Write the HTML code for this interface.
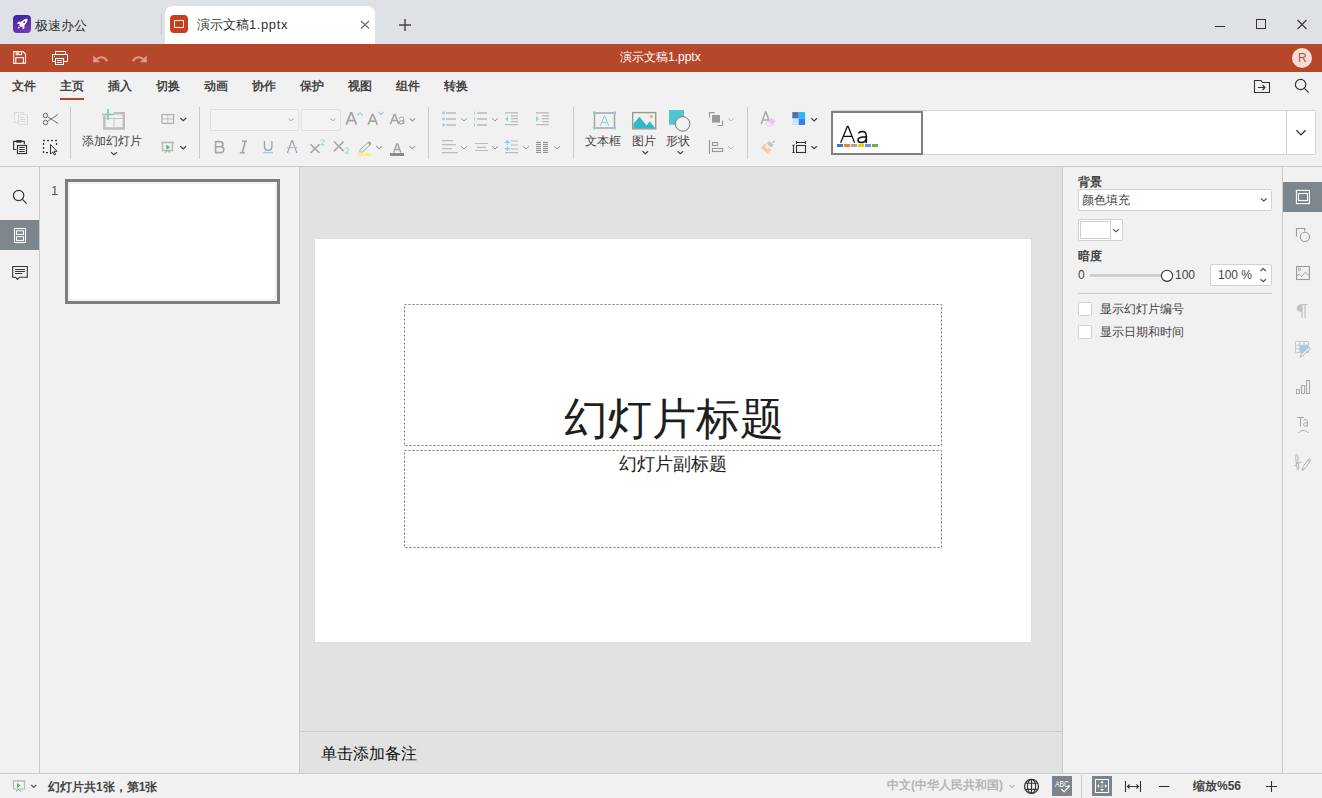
<!DOCTYPE html>
<html><head><meta charset="utf-8">
<style>
*{box-sizing:border-box;margin:0;padding:0}
html,body{width:1322px;height:798px;overflow:hidden;background:#f1f1f1;font-family:"Liberation Sans",sans-serif;color:#444}
.a{position:absolute}
.t{position:absolute;white-space:nowrap;line-height:1;z-index:2}
svg{position:absolute;overflow:visible;z-index:1}
#tabbar{left:0;top:0;width:1322px;height:44px;background:#dee1e6}
#hdr{left:0;top:44px;width:1322px;height:28px;background:#b7472a}
#menu{left:0;top:72px;width:1322px;height:95px;background:#f1f1f1;border-bottom:1px solid #cbcbcb}
.sep{position:absolute;width:1px;background:#cbcbcb}
.menu{font-size:12px;font-weight:bold;color:#444;top:80px}
</style></head><body>
<!-- tab bar -->
<div id="tabbar" class="a"></div>
<div class="a" style="left:13px;top:15px;width:18px;height:18px;border-radius:4px;background:linear-gradient(160deg,#3b23a0,#7b3bb5)"></div>
<div class="t" style="left:35px;top:19px;font-size:13px;color:#333">极速办公</div>
<div class="sep" style="left:161px;top:14px;height:21px;background:#c3c6cc"></div>
<div class="a" style="left:165px;top:6px;width:210px;height:38px;background:#fff;border-radius:8px 8px 0 0"></div>
<div class="a" style="left:170px;top:15px;width:18px;height:18px;border-radius:4px;background:#c4401f"></div>
<div class="a" style="left:174px;top:20px;width:10px;height:8px;border:1px solid rgba(255,255,255,.9)"></div>
<div class="t" style="left:197px;top:18px;font-size:13px;color:#333">演示文稿<span style="letter-spacing:.6px">1.pptx</span></div>

<!-- header -->
<div id="hdr" class="a"></div>
<div class="t" style="left:620px;top:51px;font-size:12px;color:#fff">演示文稿1.pptx</div>
<div class="a" style="left:1292px;top:48px;width:20px;height:20px;border-radius:50%;background:#f3ddd6"></div>
<div class="t" style="left:1298px;top:52px;font-size:12px;color:#b0574a">R</div>

<!-- menu -->
<div id="menu" class="a"></div>
<div class="t menu" style="left:12px">文件</div>
<div class="t menu" style="left:60px">主页</div>
<div class="a" style="left:60px;top:97.6px;width:24px;height:2.4px;background:#b7472a"></div>
<div class="t menu" style="left:108px">插入</div>
<div class="t menu" style="left:156px">切换</div>
<div class="t menu" style="left:204px">动画</div>
<div class="t menu" style="left:252px">协作</div>
<div class="t menu" style="left:300px">保护</div>
<div class="t menu" style="left:348px">视图</div>
<div class="t menu" style="left:396px">组件</div>
<div class="t menu" style="left:444px">转换</div>

<!-- main -->
<div class="a" style="left:0;top:167px;width:40px;height:606px;background:#f1f1f1;border-right:1px solid #cbcbcb"></div>
<div class="a" style="left:0;top:220px;width:39px;height:30px;background:#7e868d"></div>
<div class="a" style="left:40px;top:167px;width:260px;height:606px;background:#f1f1f1;border-right:1px solid #cbcbcb"></div>
<div class="t" style="left:51px;top:184px;font-size:13px;color:#555">1</div>
<div class="a" style="left:65px;top:179px;width:215px;height:125px;border:3px solid #7e7e7e;background:#fff;box-shadow:inset 0 0 0 2px #f2f2f2"></div>
<div class="a" style="left:300px;top:167px;width:762px;height:606px;background:#e2e2e2"></div>
<div class="a" style="left:315px;top:239px;width:716px;height:403px;background:#fff;box-shadow:0 0 0 1px #dedede"></div>
<svg width="1322" height="798" style="left:0;top:0" fill="none"><rect x="404.5" y="304.5" width="537" height="141" stroke="#7a7a7a" stroke-width="1" stroke-dasharray="2 2"/><rect x="404.5" y="450.5" width="537" height="97" stroke="#7a7a7a" stroke-width="1" stroke-dasharray="2 2"/></svg>
<div class="t" style="left:564px;top:397px;font-size:44px;color:#1e1e1e">幻灯片标题</div>
<div class="t" style="left:619px;top:455px;font-size:18px;color:#222">幻灯片副标题</div>
<div class="a" style="left:300px;top:731px;width:762px;height:42px;background:#e2e2e2;border-top:1px solid #cbcbcb"></div>
<div class="t" style="left:321px;top:746px;font-size:16px;color:#111">单击添加备注</div>
<div class="a" style="left:1062px;top:167px;width:221px;height:606px;background:#f1f1f1;border-left:1px solid #cbcbcb;border-right:1px solid #cbcbcb"></div>
<div class="a" style="left:1283px;top:182px;width:39px;height:30px;background:#7e868d"></div>

<!-- status -->
<div class="a" style="left:0;top:773px;width:1322px;height:25px;background:#f1f1f1;border-top:1px solid #cbcbcb"></div>
<div class="t" style="left:48px;top:781px;font-size:12px;font-weight:bold;color:#444">幻灯片共1张，第1张</div>
<div class="t" style="left:887px;top:779px;font-size:12px;font-weight:bold;color:#b5b5b5">中文(中华人民共和国)</div>
<div class="t" style="left:1193px;top:780px;font-size:12px;font-weight:bold;color:#444">缩放%56</div>

<!-- toolbar texts -->
<div class="t" style="left:82px;top:135px;font-size:12px;color:#444">添加幻灯片</div>
<div class="t" style="left:585px;top:135px;font-size:12px;color:#444">文本框</div>
<div class="t" style="left:632px;top:135px;font-size:12px;color:#444">图片</div>
<div class="t" style="left:666px;top:135px;font-size:12px;color:#444">形状</div>

<!-- right panel texts -->
<div class="t" style="left:1078px;top:176px;font-size:12px;font-weight:bold;color:#444">背景</div>
<div class="t" style="left:1082px;top:194px;font-size:12px;color:#444">颜色填充</div>
<div class="t" style="left:1078px;top:250px;font-size:12px;font-weight:bold;color:#444">暗度</div>
<div class="t" style="left:1078px;top:269px;font-size:12px;color:#444">0</div>
<div class="t" style="left:1175px;top:269px;font-size:12px;color:#444">100</div>
<div class="t" style="left:1218px;top:269px;font-size:12px;color:#444">100 %</div>
<div class="t" style="left:1100px;top:303px;font-size:12px;color:#444">显示幻灯片编号</div>
<div class="t" style="left:1100px;top:326px;font-size:12px;color:#444">显示日期和时间</div>
<svg width="1322" height="798" viewBox="0 0 1322 798" style="left:0;top:0" fill="none">
<!-- ===== tab bar ===== -->
<!-- rocket -->
<g transform="translate(22.4 23.9) rotate(45)" fill="#fff">
<path d="M0 -7.2C2.4 -5.4 2.5 -2 2.2 2.2H-2.2C-2.5 -2 -2.4 -5.4 0 -7.2z"/>
<path d="M-2.2 -0.8L-4.3 1.4V3.6L-2.2 2.2zM2.2 -0.8L4.3 1.4V3.6L2.2 2.2z"/>
<rect x="-1.4" y="2" width="2.8" height="1.4"/>
<path d="M-1.2 4.4H1.2L0 6.8z"/>
<circle cx="0" cy="-2.6" r="0.9" fill="#5a2eaa"/>
</g>
<!-- close x on tab -->
<path d="M361 21l8 7.5M369 21l-8 7.5" stroke="#666" stroke-width="1.1"/>
<!-- plus -->
<path d="M405 19v12M399 25h12" stroke="#444" stroke-width="1.4"/>
<!-- window controls -->
<path d="M1215 26.5h10" stroke="#333" stroke-width="1"/>
<rect x="1256.5" y="19.5" width="9" height="9" stroke="#333" stroke-width="1"/>
<path d="M1297.5 20l9 9M1306.5 20l-9 9" stroke="#333" stroke-width="1.1"/>

<!-- ===== header ===== -->
<!-- save -->
<path d="M13.6 51.6H23.2L25.5 54V63.4H13.6Z" stroke="#f8ebe6" stroke-width="1.2"/>
<path d="M16.2 51.6V54.6H21.6V51.6" stroke="#f8ebe6" stroke-width="1.1"/>
<rect x="16.8" y="52.2" width="2.4" height="1.9" fill="#efd2c8"/>
<path d="M15.8 63.4V57.7H23.4V63.4" stroke="#f8ebe6" stroke-width="1.2"/>
<!-- print -->
<path d="M55.5 54.5v-3h10v3" stroke="#fff" stroke-width="1"/>
<path d="M55.5 61.5H52.5V54.5H67.5V61.5H64" stroke="#fff" stroke-width="1"/>
<rect x="55.5" y="58.5" width="8" height="6" stroke="#fff" stroke-width="1"/>
<path d="M57 60.5h5M57 62.5h5" stroke="#fff" stroke-width="1"/>
<circle cx="54.5" cy="56.3" r=".6" fill="#fff"/>
<!-- undo / redo -->
<path d="M93.2 55.2V62.2H100.2Z" fill="#dd9a88"/>
<path d="M95.8 59.6C99.6 56 104.6 56.4 107.1 61.2" stroke="#dd9a88" stroke-width="1.9"/>
<path d="M146.8 55.2V62.2H139.8Z" fill="#dd9a88"/>
<path d="M144.2 59.6C140.4 56 135.4 56.4 132.9 61.2" stroke="#dd9a88" stroke-width="1.9"/>

<!-- ===== menu right ===== -->
<path d="M1254.5 92.5V80.5H1261L1262.5 82.5H1269.5V92.5Z" stroke="#333" stroke-width="1.1"/>
<path d="M1258 87.5H1265M1262.5 85L1265 87.5 1262.5 90" stroke="#333" stroke-width="1.1"/>
<circle cx="1300.6" cy="84.5" r="5.2" stroke="#333" stroke-width="1.2"/>
<path d="M1304.4 88.3l4.3 4.3" stroke="#333" stroke-width="1.2"/>

<!-- ===== toolbar: clipboard ===== -->
<rect x="14.5" y="112.5" width="9" height="10" stroke="#dcdcdc" stroke-width="1"/>
<rect x="18.5" y="114.5" width="9" height="10" fill="#f1f1f1" stroke="#dcdcdc" stroke-width="1"/>
<path d="M20 117.5h4M20 119.5h6M20 121.5h6" stroke="#dcdcdc" stroke-width="1"/>
<circle cx="45.5" cy="115.5" r="2.2" stroke="#666" stroke-width="1"/>
<circle cx="45.5" cy="122.5" r="2.2" stroke="#666" stroke-width="1"/>
<path d="M47.5 116.7l10.5 6.8M47.5 121.3l10.5-6.8" stroke="#666" stroke-width=".9"/>
<path d="M15.8 149.5H13.6V141.3H24.3V143.8" stroke="#333" stroke-width="1.2" stroke-linecap="round" stroke-linejoin="round"/>
<rect x="16.2" y="140.1" width="5.6" height="2.6" rx=".6" fill="#333"/>
<rect x="17.5" y="145.5" width="9" height="8" fill="#fff" stroke="#333" stroke-width="1.2"/>
<path d="M19.2 147.5h5.6M19.2 149.5h5.6M19.2 151.5h5.6" stroke="#333" stroke-width="1"/>
<g fill="#333"><rect x="43" y="139.9" width="2" height="1.25"/><rect x="47" y="139.9" width="2" height="1.25"/><rect x="51" y="139.9" width="2" height="1.25"/><rect x="55" y="139.9" width="2" height="1.25"/><rect x="42.9" y="143" width="1.25" height="2"/><rect x="42.9" y="147" width="1.25" height="2"/><rect x="42.9" y="151" width="1.25" height="2"/><rect x="46" y="152" width="2" height="1.25"/><rect x="55.9" y="143" width="1.25" height="2"/></g>
<path d="M50.5 144.5v9.5l2.3-2 1.7 3 1.2-.7-1.7-3h3z" stroke="#333" stroke-width="1" fill="#f1f1f1"/>
<!-- separators -->
<path d="M70.5 107v52M199.5 107v52M428.5 107v52M573.5 107v52M747.5 107v52" stroke="#cbcbcb" stroke-width="1"/>

<!-- add slide -->
<path d="M113.7 113.2H123.8V128.5H104.3V116" stroke="#bdbdbd" stroke-width="2.4"/>
<path d="M105 118.5h18M114 118.5v9" stroke="#c4c4c4" stroke-width="1"/>
<path d="M108 109v11M102 114.5h12" stroke="#76cf9c" stroke-width="1.6"/>
<path d="M111 152.3l3 2.5 3-2.5" stroke="#444" stroke-width="1.2"/>
<!-- layout -->
<rect x="162" y="114.6" width="11.6" height="8.8" stroke="#b0b0b0" stroke-width="1.3"/>
<path d="M167.8 115v8M162.5 119h11" stroke="#bdbdbd" stroke-width="1"/>
<path d="M180.3 118l2.9 2.7 2.9-2.7" stroke="#444" stroke-width="1.2"/>
<!-- slideshow -->
<path d="M161 142.5h13" stroke="#b8b8b8" stroke-width="1.6"/>
<path d="M162.5 142.5v8h10v-8" stroke="#b8b8b8" stroke-width="1.5"/>
<path d="M165 152.5l2.5-2 2.5 2" stroke="#999" stroke-width="1"/>
<path d="M166.3 144.8v4.8l4-2.4z" fill="#3cc257"/>
<path d="M180.3 146.2l2.9 2.7 2.9-2.7" stroke="#444" stroke-width="1.2"/>
</svg>
<svg width="1322" height="798" viewBox="0 0 1322 798" style="left:0;top:0" fill="none">
<!-- font combos -->
<rect x="210.5" y="109.5" width="88" height="21" rx="1" fill="#f3f3f3" stroke="#e0e0e0" stroke-width="1"/>
<rect x="301.5" y="109.5" width="39" height="21" rx="1" fill="#f3f3f3" stroke="#e0e0e0" stroke-width="1"/>
<path d="M288.5 118.5l2.5 2.3 2.5-2.3M330.5 118.5l2.5 2.3 2.5-2.3" stroke="#aaa" stroke-width="1"/>
<!-- grow/shrink -->
<path d="M346.2 124.6l4.7-11.6h.8l4.7 11.6M348.2 120.6h6.2" stroke="#a5a5a5" stroke-width="1.8"/>
<path d="M357.3 115.5l2.7-2.7 2.7 2.7" stroke="#8fd4e0" stroke-width="1.2"/>
<path d="M368.2 124.6l4.2-10.1h.7l4.2 10.1M370 121.2h6.6" stroke="#a5a5a5" stroke-width="1.7"/>
<path d="M378.2 111.8l2.7 2.7 2.7-2.7" stroke="#8fd4e0" stroke-width="1.2"/>
<path d="M390.4 124l3.8-9.6h.7l3.8 9.6M391.9 120.6h5.4" stroke="#a5a5a5" stroke-width="1.5"/>
<path d="M399.3 118.6c.4-1.3 1.6-1.7 2.6-1.6 1.4.2 1.9 1 1.9 2.4V124M403.8 120.7c-3.5-.2-4.7.6-4.7 1.8 0 1 .7 1.6 1.7 1.6 1.6 0 2.6-1.2 3-2" stroke="#a5a5a5" stroke-width="1.1"/>
<path d="M409.5 118.3l2.8 2.6 2.8-2.6" stroke="#9a9a9a" stroke-width="1.1"/>
<!-- B I U S x2 x2 -->
<path d="M215.6 141.6h4.2c2.1 0 3.2 1 3.2 2.7 0 1.6-1 2.5-3.1 2.5h-4.3M215.6 146.8h4.7c2.3 0 3.5 1.1 3.5 2.9 0 1.9-1.2 2.9-3.5 2.9h-4.7zM215.6 141v12.2" stroke="#a5a5a5" stroke-width="1.6"/>
<path d="M242 141.2h5M239.8 152.8h5M245.3 141.2l-3 11.6" stroke="#a5a5a5" stroke-width="1.6"/>
<path d="M264.5 141v5.5c0 2.5 1.3 3.8 3.7 3.8s3.7-1.3 3.7-3.8V141" stroke="#a5a5a5" stroke-width="1.4"/>
<path d="M263.3 152.6h9.7" stroke="#8fd4e0" stroke-width="1.3"/>
<path d="M287.4 153l4.4-12.4h.6l4.5 12.4" stroke="#a5a5a5" stroke-width="1.3"/>
<path d="M286.8 147.6h10.5" stroke="#8fd4e0" stroke-width="1.2"/>
<path d="M310.5 144.2l9 8.8M319.5 144.2l-9 8.8" stroke="#a5a5a5" stroke-width="1.6"/>
<path d="M320.7 141c.3-1 1-1.4 1.8-1.4s1.6.5 1.6 1.4c0 1-1.3 2-3.4 3.8h3.6" stroke="#8fd4e0" stroke-width="1"/>
<path d="M334 141.5l9.6 9.6M343.6 141.5l-9.6 9.6" stroke="#a5a5a5" stroke-width="1.6"/>
<path d="M345.3 149.3c.3-1 1-1.4 1.8-1.4s1.6.5 1.6 1.4c0 1-1.3 2-3.4 3.8h3.6" stroke="#8fd4e0" stroke-width="1"/>
<!-- highlight -->
<path d="M359.6 150.2l8.2-7.6c.8-.7 1.8-.7 2.4 0 .6.6.6 1.6-.2 2.4l-8.2 7.5z" fill="#e3f3f7" stroke="#a5a5a5" stroke-width="1"/><path d="M367.6 142.8c.9-.9 2-.9 2.6-.3.6.6.6 1.7-.3 2.6z" fill="#9a9a9a"/>
<path d="M358.3 152.5l1.3-2.3 2.3 2.2z" fill="#ccc"/>
<rect x="357" y="153" width="14" height="3" fill="#f7f28a"/>
<path d="M376.3 146.2l2.8 2.6 2.8-2.6" stroke="#9a9a9a" stroke-width="1.1"/>
<!-- font color -->
<path d="M393.7 152.6l3.1-8.6h.9l3.1 8.6M395 149.5h4.5" stroke="#a0a0a0" stroke-width="1.4"/>
<rect x="390" y="153" width="14" height="3" fill="#8a8a8a"/>
<path d="M409.5 146.2l2.8 2.6 2.8-2.6" stroke="#9a9a9a" stroke-width="1.1"/>

<!-- ===== paragraph ===== -->
<g fill="#8fd4e0"><circle cx="443.6" cy="113" r="1.4"/><circle cx="443.6" cy="119" r="1.4"/><circle cx="443.6" cy="125" r="1.4"/></g>
<path d="M446 113h10M446 119h10M446 125h10" stroke="#bbb" stroke-width="1.4"/>
<path d="M461 118.3l3 2.6 3-2.6" stroke="#999" stroke-width="1"/>
<path d="M474.5 111.5v3M474.5 117.5v3M474.5 123.5v3" stroke="#8fd4e0" stroke-width="1"/>
<path d="M477 113h10M477 119h10M477 125h10" stroke="#bbb" stroke-width="1.4"/>
<path d="M492 118.3l3 2.6 3-2.6" stroke="#999" stroke-width="1"/>
<path d="M505 112.8h13M511 115.8h7M511 118.7h7M511 121.7h7M505 124.6h13" stroke="#bbb" stroke-width="1.2"/>
<path d="M508 116v6l-3-3z" fill="#8fd4e0"/>
<path d="M536 112.8h13M542 115.8h7M542 118.7h7M542 121.7h7M536 124.6h13" stroke="#bbb" stroke-width="1.2"/>
<path d="M536 116v6l3-3z" fill="#8fd4e0"/>
<path d="M442 140.7h11M442 144.7h14M442 148.6h10M442 152.6h16" stroke="#bbb" stroke-width="1.2"/>
<path d="M461 146.3l3 2.6 3-2.6" stroke="#999" stroke-width="1"/>
<path d="M475 143.5h13M477 147.3h9M475 150.5h13" stroke="#bbb" stroke-width="1.2"/>
<path d="M492 146.3l3 2.6 3-2.6" stroke="#999" stroke-width="1"/>
<path d="M511 141h7M511 145h7M511 149h7M505 152.7h13" stroke="#bbb" stroke-width="1.2"/>
<path d="M507.5 140.5l-2 2h4zM507.5 145v-2M507.5 146v2.5M507.5 150.5l-2-2h4z" stroke="#8fd4e0" stroke-width="1.2" fill="#8fd4e0"/>
<path d="M523 146.3l3 2.6 3-2.6" stroke="#999" stroke-width="1"/>
<path d="M536 142.4h5M536 144.4h5M536 146.4h5M536 148.4h5M536 150.4h5M536 152.4h5M543 142.4h5M543 144.4h5M543 146.4h5M543 148.4h5M543 150.4h5M543 152.4h5" stroke="#888" stroke-width="1"/>
<path d="M554 146.3l3 2.6 3-2.6" stroke="#999" stroke-width="1"/>

<!-- ===== insert ===== -->
<rect x="594.5" y="113" width="20" height="15" stroke="#aaa" stroke-width="1.6"/>
<g fill="#7fd3e3"><rect x="593" y="111.5" width="2.6" height="2.6"/><rect x="613.4" y="111.5" width="2.6" height="2.6"/><rect x="593" y="126.8" width="2.6" height="2.6"/><rect x="613.4" y="126.8" width="2.6" height="2.6"/></g>
<path d="M600.2 126l4.1-10h.4l4.1 10M601.6 122.6h6" stroke="#7fd3e3" stroke-width="1"/>
<rect x="632.7" y="112.6" width="23" height="16.2" stroke="#999" stroke-width="1.4"/>
<path d="M633.4 128.2v-4.4l6-7 7.3 8.6 3-4.2 5.6 7z" fill="#2fb9c9"/>
<circle cx="651.3" cy="116.3" r="1.6" fill="#f4b266"/>
<rect x="669" y="110" width="15" height="14.8" fill="#4dc7d8"/>
<circle cx="682.6" cy="123.9" r="7.3" fill="#f1f1f1" stroke="#777" stroke-width="1"/>
<path d="M642.5 151.3l2.8 2.4 2.8-2.4M677.5 151.3l2.8 2.4 2.8-2.4" stroke="#444" stroke-width="1.2"/>
<!-- arrange -->
<rect x="712" y="115" width="8" height="7.6" fill="#999"/>
<path d="M709.5 117.6v-5h5M717.5 125.5h5v-5" stroke="#999" stroke-width="1.1"/>
<path d="M728 118.2l3 2.7 3-2.7" stroke="#bbb" stroke-width="1"/>
<path d="M709.5 140v14" stroke="#999" stroke-width="1.1"/>
<rect x="712.5" y="142.5" width="5.2" height="3" stroke="#999" stroke-width="1.1"/>
<rect x="712.5" y="148.5" width="10.2" height="3" stroke="#999" stroke-width="1.1"/>
<path d="M728 146.2l3 2.7 3-2.7" stroke="#bbb" stroke-width="1"/>

<!-- ===== design ===== -->
<path d="M761.3 124l4.1-12h.6l4.1 12M762.6 120h6.4" stroke="#a8a8a8" stroke-width="1.5"/>
<path d="M771.5 117.8l4.3 3.6-3.2 3.4-4.3-3.6z" fill="#e8c7ec"/>
<path d="M768.3 121.2l4.3 3.6-1.2 1.2h-3.5l-1.5-1.3c-.6-.6-.6-1.4 0-2z" fill="#f6eef7" stroke="#e8c7ec" stroke-width=".9"/>
<rect x="792.3" y="112.1" width="6.4" height="6.4" fill="#4f70a8"/>
<rect x="798.7" y="112.1" width="6.4" height="6.4" fill="#29b6f6"/>
<rect x="792.3" y="118.5" width="6.4" height="6.5" fill="#c8e6fa"/>
<rect x="798.7" y="118.5" width="6.4" height="6.5" fill="#2f80f9"/>
<path d="M811.3 118.3l2.8 2.6 2.8-2.6" stroke="#444" stroke-width="1.2"/>
<path d="M761 147.5l6.5 6.3 4-4-6.5-6.3z" fill="#f5c9a3"/>
<path d="M764.5 146.2l3.3 3.2 1.5-1.5-3.3-3.2" fill="#f1f1f1"/>
<path d="M767 143.5l4 4 2.5-2.5-4-4z" fill="#c4c4c4"/>
<path d="M772.5 143l2.2-2.3" stroke="#c4c4c4" stroke-width="1.6"/>
<path d="M792.4 145.3h2.2M792.4 152.5h2.2M793.5 145.3v7.2" stroke="#333" stroke-width="1.1"/>
<path d="M796.5 142.5h9M796.5 141v3M805.5 141v3" stroke="#333" stroke-width="1.1"/>
<rect x="796.5" y="145.5" width="9" height="7" stroke="#333" stroke-width="1.1"/>
<path d="M811.3 146.2l2.8 2.6 2.8-2.6" stroke="#444" stroke-width="1.2"/>

<!-- ===== theme gallery ===== -->
<rect x="831.5" y="110.5" width="484" height="44" rx="1" fill="#fff" stroke="#d4d4d4" stroke-width="1"/>
<path d="M1286.5 111v43" stroke="#d4d4d4" stroke-width="1"/>
<rect x="832" y="112" width="90" height="42" fill="#fff" stroke="#808080" stroke-width="2"/>
<path d="M1296.4 130.3l4.6 4.6 4.6-4.6" stroke="#333" stroke-width="1.3"/>
<path d="M840.7 142.8L847.3 126.4H848.1L854.6 142.8M843.1 136.4H852.2" stroke="#111" stroke-width="1.25"/>
<path d="M858.4 133.4C859.3 132 860.7 131.4 862.3 131.4C865 131.4 866.2 132.8 866.2 135.4V142.7M866.2 136.8C861 136.8 857.9 137.8 857.9 140.1C857.9 141.7 859.1 142.6 861 142.6C863.5 142.6 865.4 141.3 866.2 139.9" stroke="#111" stroke-width="1.5"/>
<path d="M866.5 136V142.8" stroke="#111" stroke-width="1.3"/>
<rect x="837" y="144" width="6" height="3" fill="#4472c4"/>
<rect x="844" y="144" width="6" height="3" fill="#ed7d31"/>
<rect x="851" y="144" width="6" height="3" fill="#a5a5a5"/>
<rect x="858" y="144" width="6" height="3" fill="#ffc000"/>
<rect x="865" y="144" width="6" height="3" fill="#5b9bd5"/>
<rect x="872" y="144" width="6" height="3" fill="#70ad47"/>
</svg>
<svg width="1322" height="798" viewBox="0 0 1322 798" style="left:0;top:0" fill="none">
<!-- left strip -->
<circle cx="18.6" cy="195.5" r="5.2" stroke="#333" stroke-width="1.2"/>
<path d="M22.4 199.3l4.3 4.3" stroke="#333" stroke-width="1.2"/>
<rect x="14.5" y="228.5" width="11" height="14" stroke="#fff" stroke-width="1.1"/>
<rect x="16.5" y="230.8" width="7" height="3.6" stroke="#fff" stroke-width="1"/>
<rect x="16.5" y="236.7" width="7" height="3.7" stroke="#fff" stroke-width="1"/>
<path d="M12.7 266.5H27.3V277.2H19.6L17.5 279.3L15.4 277.2H12.7Z" stroke="#333" stroke-width="1.1" stroke-linejoin="round"/>
<path d="M15.4 269.5H24.6M15.4 271.5H24.6M15.4 273.5H21.8" stroke="#333" stroke-width="1" stroke-linecap="round"/>

<!-- right strip -->
<rect x="1296.4" y="190.4" width="13" height="13.2" stroke="#fff" stroke-width="1.1"/>
<rect x="1298.5" y="193.5" width="9" height="7" stroke="#fff" stroke-width="1.1"/>
<path d="M1296.5 236.5v-8h8.2v3" stroke="#999" stroke-width="1.1"/>
<circle cx="1304.9" cy="236.9" r="4.6" fill="#f1f1f1" stroke="#999" stroke-width="1.1"/>
<rect x="1296.6" y="266.5" width="12.8" height="13" stroke="#999" stroke-width="1.1"/>
<circle cx="1299.5" cy="269.4" r="1.2" stroke="#999" stroke-width=".9"/>
<path d="M1296.6 276.2l2.6-2.3 2.4 2.6 3.7-4.4 4.1 3.9" stroke="#999" stroke-width=".9"/>
<path d="M1301.8 304.5h5.6M1302 304.5v13.3M1305 304.5v13.3" stroke="#c2c2c2" stroke-width="1.2"/>
<path d="M1302 304.3c-3.6 0-5.4 1.7-5.4 4s1.8 3.9 5.4 3.9z" fill="#c2c2c2"/>
<g stroke="#c8c8c8" stroke-width="1"><path d="M1295.5 341.5h13v11h-13zM1295.5 345.2h13M1295.5 348.9h13M1299.8 341.5v11M1304.1 341.5v11"/></g>
<rect x="1299.8" y="345.2" width="8.7" height="7.3" fill="#a9cbe8"/>
<path d="M1301 354.5l7.5-7.5 1.6 1.6-7.5 7.5-2.5.8z" fill="#f1f1f1" stroke="#aaa" stroke-width=".9"/>
<path d="M1296.5 389.5h3v4h-3zM1301.5 385.5h3v8h-3zM1306.5 380.5h3v13h-3z" stroke="#aaa" stroke-width="1.1"/>
<path d="M1297.2 417.5h6.6M1300.5 417.5v9.3" stroke="#aaa" stroke-width="1.1"/>
<path d="M1303.5 420.5c.3-.8 1-1.2 1.9-1.2 1.2 0 1.9.6 1.9 2v5.5M1307.3 422.8c-2.8 0-3.8.6-3.8 1.8 0 .9.6 1.5 1.5 1.5 1.3 0 2.2-.8 2.3-1.8" stroke="#aaa" stroke-width="1"/>
<path d="M1298.3 433c2.8-3.4 7.2-3.4 10 0" stroke="#aaa" stroke-width="1"/>
<path d="M1294 466.2c2-1 3.5-2.5 4-5.6.3-2 .1-6-1.3-6-1.4 0-.9 4.5-.3 9 .5 3.5.6 6.2 1.7 6.2 1.2 0 .6-4.6-.2-7 1.2.8 2-.5 2.6-.7.7-.2.8.8 1.5.6" stroke="#aaa" stroke-width=".9"/>
<path d="M1302.2 470.5l1-3.8 5.6-8.2 2 1.4-5.6 8.2z" stroke="#aaa" stroke-width=".9"/>
<path d="M1307.5 460.5l2 1.4" stroke="#aaa" stroke-width=".9"/>

<!-- right panel -->
<rect x="1078.5" y="189.5" width="193" height="21" rx="1.5" fill="#fff" stroke="#d2d2d2" stroke-width="1"/>
<path d="M1261 198.5l2.8 2.6 2.8-2.6" stroke="#444" stroke-width="1.1"/>
<rect x="1078.5" y="219.5" width="44" height="21" rx="1.5" fill="#fff" stroke="#d2d2d2" stroke-width="1"/>
<rect x="1080.5" y="221.5" width="30" height="17" fill="#fff" stroke="#cfcfcf" stroke-width="1"/>
<path d="M1113.3 229.2l2.8 2.6 2.8-2.6" stroke="#444" stroke-width="1.1"/>
<path d="M1091 275.5h75" stroke="#cfcfcf" stroke-width="3" stroke-linecap="round"/>
<circle cx="1167" cy="275.8" r="5.6" fill="#fff" stroke="#333" stroke-width="1.1"/>
<rect x="1210.5" y="264.5" width="61" height="21" rx="1.5" fill="#fff" stroke="#d2d2d2" stroke-width="1"/>
<path d="M1260.5 271l2.7-2.5 2.7 2.5M1260.5 279.2l2.7 2.5 2.7-2.5" stroke="#555" stroke-width="1.2"/>
<path d="M1078 293.5h194" stroke="#cbcbcb" stroke-width="1"/>
<rect x="1078.5" y="302.5" width="13" height="13" rx="1" fill="#fff" stroke="#d2d2d2" stroke-width="1"/>
<rect x="1078.5" y="325.5" width="13" height="13" rx="1" fill="#fff" stroke="#d2d2d2" stroke-width="1"/>

<!-- status bar -->
<path d="M12.5 781h13" stroke="#b8b8b8" stroke-width="1.4"/>
<path d="M13.5 781v8h11v-8" stroke="#b8b8b8" stroke-width="1.2"/>
<path d="M16 791.5l2.5-2 2.5 2" stroke="#999" stroke-width="1"/>
<path d="M17 783v5l3.6-2.5z" fill="#3cc257"/>
<path d="M31.3 785l2.5 2.4 2.5-2.4" stroke="#555" stroke-width="1.1"/>
<path d="M1009.5 785l2.5 2.4 2.5-2.4" stroke="#bbb" stroke-width="1.1"/>
<circle cx="1031.5" cy="786.4" r="7" stroke="#333" stroke-width="1.3"/>
<ellipse cx="1031.5" cy="786.4" rx="4.1" ry="7" stroke="#333" stroke-width="1.1"/>
<path d="M1031.5 779.4v14M1025.2 783.3h12.6M1025.2 789.4h12.6" stroke="#333" stroke-width="1.1"/>
<rect x="1052" y="776" width="20" height="20" fill="#7b838b"/>
<text x="1055" y="787" font-family="Liberation Sans" font-size="8.5" fill="#fff" textLength="14" lengthAdjust="spacingAndGlyphs">ABC</text>
<path d="M1061.3 788.8l2.8 3 5.8-6.3" stroke="#fff" stroke-width="1.2"/>
<path d="M1081.5 775v23" stroke="#cbcbcb" stroke-width="1"/>
<rect x="1092" y="776" width="20" height="20" fill="#7b838b"/>
<rect x="1095.5" y="779.5" width="13" height="13" stroke="#fff" stroke-width="1"/>
<path d="M1098.5 786h7M1102 782.5v7" stroke="#fff" stroke-width=".8" stroke-dasharray="1 1"/>
<path d="M1096.8 786l2.2-1.8v3.6zM1107.2 786l-2.2-1.8v3.6zM1102 780.8l-1.8 2.2h3.6zM1102 791.2l-1.8-2.2h3.6z" fill="#fff"/>
<path d="M1125.5 781v11M1140.5 781v11M1127.5 786.5h11M1129.5 784.5l-2 2 2 2M1136.5 784.5l2 2-2 2" stroke="#333" stroke-width="1.1"/>
<path d="M1159 786.5h10.5" stroke="#333" stroke-width="1.1"/>
<path d="M1266 786.5h11M1271.5 781v11" stroke="#333" stroke-width="1.1"/>
</svg>

</body></html>
